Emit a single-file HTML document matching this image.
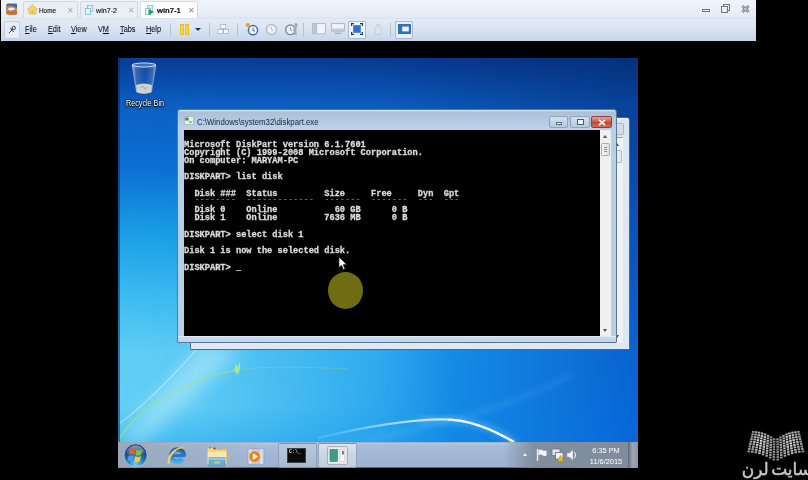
<!DOCTYPE html>
<html lang="en">
<head>
<meta charset="utf-8">
<title>win7-1 - VMware Workstation</title>
<style>
html,body{margin:0;padding:0;background:#000;}
body{width:808px;height:480px;overflow:hidden;position:relative;font-family:"Liberation Sans",sans-serif;}
.abs{position:absolute;}
/* ---------- VMware chrome ---------- */
#chrome{position:absolute;left:1px;top:0;width:755px;height:41px;background:linear-gradient(#eff4fa 0,#e9eff7 12px,#e4ebf5 17px,#d6e0ee 18px,#e2eaf5 19.5px,#dbe5f3 28px,#c8d6ec 40px);overflow:hidden;filter:blur(.35px);}
.tab{position:absolute;top:1px;height:17px;border:1px solid #cfd8e4;border-bottom:none;border-radius:2px 2px 0 0;background:#eaeff6;box-sizing:border-box;}
.tab.active{background:#fff;border-color:#d5dce6;}
.tab span.t{position:absolute;top:3.5px;font-size:7.6px;color:#14181f;-webkit-text-stroke:.15px #14181f;white-space:nowrap;transform-origin:0 50%;transform:scaleX(.84);}
.tab.active span.t{font-weight:bold;color:#111;}
.tab span.x{position:absolute;top:3.5px;font-size:7.6px;color:#a3abb6;}
.menu{position:absolute;top:24px;font-size:8.6px;transform:scaleX(.85);color:#0a0f1a;-webkit-text-stroke:.08px #0a0f1a;white-space:nowrap;transform-origin:0 50%;}
.menu u{text-decoration:underline;text-underline-offset:1px;}
.sep{position:absolute;top:23px;width:1px;height:14px;background:#b4c2d6;}
.tbtn{position:absolute;top:20.5px;height:18px;border:1px solid #c0cde0;background:#e6edf8;box-sizing:border-box;border-radius:1px;}
/* ---------- Desktop ---------- */
#desk{position:absolute;left:118px;top:58px;width:520px;height:410px;overflow:hidden;background:#0c55b8;filter:blur(.35px);}
#wall{position:absolute;left:0;top:0;}
#rb{position:absolute;left:1.5px;top:39.6px;width:50px;text-align:center;color:#fff;font-size:8.4px;white-space:nowrap;text-shadow:0 1px 1px #000,0 0 2px #000,0 0 3px #000;transform:scaleX(.86);filter:blur(.25px);}
/* windows */
.win{position:absolute;background:linear-gradient(#e4edf6 0,#aac1d9 2px,#bcd2ea 19px,#b9cfe6 20px);border:1px solid #5d7894;box-sizing:border-box;border-radius:3px 3px 1px 1px;}
#title{position:absolute;left:19px;top:6.4px;font-size:9px;color:#1b2532;white-space:nowrap;transform-origin:0 50%;transform:scaleX(.868);}
#con{position:absolute;left:6px;top:20.2px;width:416px;height:205.5px;background:#000;overflow:hidden;}
#con pre{margin:0;position:absolute;left:0;top:1.9px;font-family:"Liberation Mono",monospace;font-weight:bold;font-size:8.667px;line-height:8.2px;color:#dcdcdc;letter-spacing:0;filter:blur(.3px);-webkit-text-stroke:.3px #dcdcdc;}
#sb{position:absolute;left:422px;top:20.2px;width:11px;height:205.5px;background:#eef0f2;}
.cb{position:absolute;top:6px;height:12px;box-sizing:border-box;border:1px solid #8fa3ba;border-radius:2px;background:linear-gradient(#d3e0ee,#b5c9df);}
/* taskbar */
#tb{position:absolute;left:0;top:383.6px;width:520px;height:26.4px;background:linear-gradient(#8fa9c8 0,#b3c4dc 1.5px,#a8bbd8 4px,#a2b6d4 60%,#9fb2d0 100%);border-bottom:1px solid #58677a;box-sizing:border-box;}
.tbb{position:absolute;top:1px;height:25px;box-sizing:border-box;border:1px solid #7c92ab;border-radius:2px;}
.tray{position:absolute;color:#fff;font-size:7.4px;white-space:nowrap;text-align:center;}
#wm{position:absolute;right:-4px;top:457px;text-align:right;color:#c6c6c6;font-family:"DejaVu Sans","Liberation Sans",sans-serif;font-size:17px;line-height:24px;white-space:nowrap;direction:rtl;filter:blur(.3px);-webkit-text-stroke:.45px #c6c6c6;word-spacing:-3px;}
</style>
</head>
<body>

<!-- ================= VMware top chrome ================= -->
<div id="chrome">
  <svg id="vmicon" class="abs" style="left:4.7px;top:3.4px" width="11.6" height="12" viewBox="0 0 13 13"><rect x=".4" y=".4" width="12.2" height="12.2" rx="2" fill="#2f6fb8"/><path d="M.4 4 Q3 2.4 7 3 Q11 3.6 12.6 6.5 V10.6 Q12.6 12.6 10.6 12.6 H2.4 Q.4 12.6 .4 10.6Z" fill="#e8802a"/><path d="M.4 9.6 Q6 11.2 12.6 9 V10.6 Q12.6 12.6 10.6 12.6 H2.4 Q.4 12.6 .4 10.6Z" fill="#d8641e"/><ellipse cx="6" cy="6.6" rx="3.6" ry="1.9" fill="#eef3f8"/><path d="M2.4 7.8 Q6 9.2 10.6 7.4 L10 8.8 Q6 10 2.8 9Z" fill="#3f82c8"/></svg>
  <div class="tab" style="left:22px;width:55px;">
    <svg class="abs" style="left:3px;top:2px" width="11" height="11" viewBox="0 0 11 11"><path d="M0.5 5.5 L5.5 0.8 L10.5 5.5 L9 5.5 L9 10 L2 10 L2 5.5 Z" fill="#f3d668" stroke="#e0bb4a" stroke-width=".8"/><rect x="4.5" y="6.5" width="2" height="3.5" fill="#e6c044"/></svg>
    <span class="t" style="left:15px;">Home</span><span class="x" style="left:43px;">✕</span>
  </div>
  <div class="tab" style="left:79px;width:58px;">
    <svg class="abs" style="left:4px;top:2.5px" width="9.5" height="10.5" viewBox="0 0 11 12"><rect x="3" y=".5" width="6" height="7" fill="#dff0fa" stroke="#79b6d9" stroke-width=".9"/><rect x=".5" y="4" width="6" height="7" fill="#e8f5fc" stroke="#79b6d9" stroke-width=".9"/></svg>
    <span class="t" style="left:15px;transform:scaleX(.94)">win7-2</span><span class="x" style="left:47px;">✕</span>
  </div>
  <div class="tab active" style="left:139px;width:58px;">
    <svg class="abs" style="left:3.5px;top:2.5px" width="10.5" height="10.5" viewBox="0 0 12 12"><rect x="3" y=".5" width="6" height="7" fill="#dff0fa" stroke="#79b6d9" stroke-width=".9"/><rect x=".5" y="4" width="6" height="7" fill="#e8f5fc" stroke="#79b6d9" stroke-width=".9"/><path d="M4 4.5 L10.5 8 L4 11.5 Z" fill="#22a83a"/></svg>
    <span class="t" style="left:16px;transform:scaleX(1.01)">win7-1</span><span class="x" style="left:47px;color:#7d8792;">✕</span>
  </div>

  <!-- window controls -->
  <div class="abs" style="left:701px;top:9px;width:8px;height:3px;border:1px solid #6d7784;box-sizing:border-box;"></div>
  <div class="abs" style="left:722px;top:4px;width:7px;height:7px;border:1px solid #6d7784;box-sizing:border-box;"></div>
  <div class="abs" style="left:720px;top:6px;width:7px;height:7px;border:1px solid #6d7784;background:#e9eef5;box-sizing:border-box;"></div>
  <svg class="abs" style="left:739.5px;top:5px" width="9" height="8" viewBox="0 0 9 8"><path d="M1.3 1 L7.7 7 M7.7 1 L1.3 7" stroke="#6d7784" stroke-width="2.6"/><path d="M1.3 1 L7.7 7 M7.7 1 L1.3 7" stroke="#f3f5f9" stroke-width=".9"/></svg>

  <!-- menu row -->
  <div class="tbtn" style="left:3px;width:16px;"></div>
  <svg class="abs" style="left:7px;top:24.5px" width="9" height="9" viewBox="0 0 11 11"><path d="M1 10 L4.6 6.4" stroke="#2a2f3a" stroke-width="1.1"/><circle cx="7" cy="3.6" r="2.1" fill="none" stroke="#2a2f3a" stroke-width="1.1"/><path d="M2.6 4.2 L6.8 8.4" stroke="#2a2f3a" stroke-width="1.2"/><path d="M4.2 5.8 L5.8 4.6" stroke="#2a2f3a" stroke-width="1.6"/></svg>
  <span class="menu" id="m1" style="left:24px;"><u>F</u>ile</span>
  <span class="menu" id="m2" style="left:47px;"><u>E</u>dit</span>
  <span class="menu" id="m3" style="left:70px;"><u>V</u>iew</span>
  <span class="menu" id="m4" style="left:97px;">V<u>M</u></span>
  <span class="menu" id="m5" style="left:119px;"><u>T</u>abs</span>
  <span class="menu" id="m6" style="left:145px;"><u>H</u>elp</span>
  <div class="sep" style="left:169px;"></div>
  <div class="abs" style="left:179px;top:24px;width:4px;height:11px;background:#f6d643;border:.5px solid #e6bc24;box-sizing:border-box;"></div>
  <div class="abs" style="left:184px;top:24px;width:4px;height:11px;background:#f6d643;border:.5px solid #e6bc24;box-sizing:border-box;"></div>
  <div class="abs" style="left:194px;top:28px;width:0;height:0;border-left:3px solid transparent;border-right:3px solid transparent;border-top:3.5px solid #27364e;"></div>
  <div class="sep" style="left:208px;"></div>
  <div id="tools">
    <!-- send ctrl-alt-del / network boxes -->
    <svg class="abs" style="left:216px;top:24px" width="12.5" height="11" viewBox="0 0 14 13"><rect x="4" y=".6" width="6" height="5" fill="#f7f9fc" stroke="#9fa9b8" stroke-width=".8"/><rect x=".6" y="6.4" width="6" height="5" fill="#f7f9fc" stroke="#9fa9b8" stroke-width=".8"/><rect x="7.4" y="6.4" width="6" height="5" fill="#f7f9fc" stroke="#9fa9b8" stroke-width=".8"/><path d="M7 5.6 V6.4" stroke="#8591a3" stroke-width=".8"/></svg>
    <div class="sep" style="left:236px;"></div>
    <!-- snapshot -->
    <svg class="abs" style="left:244px;top:22px" width="14" height="14" viewBox="0 0 14 14"><circle cx="8" cy="8.2" r="4.6" fill="#f4f8fc" stroke="#3d6ea8" stroke-width="1.5"/><path d="M8 5.6 V8.4 L10 9.2" stroke="#3d6ea8" stroke-width="1" fill="none"/><circle cx="2.8" cy="3" r="2.1" fill="#f39a2b"/></svg>
    <svg class="abs" style="left:263px;top:22px" width="14" height="14" viewBox="0 0 14 14"><circle cx="7.5" cy="7.5" r="5" fill="#eef1f5" stroke="#b3bcc8" stroke-width="1.4"/><path d="M7.5 4.8 V7.8 L9.4 8.6" stroke="#b3bcc8" stroke-width="1" fill="none"/><path d="M.8 5.5 L3.6 4 L3.4 7 Z" fill="#b9c1cc"/></svg>
    <svg class="abs" style="left:283px;top:22px" width="14" height="14" viewBox="0 0 14 14"><circle cx="6.4" cy="7.8" r="4.8" fill="#eef2f7" stroke="#7d8da6" stroke-width="1.4"/><path d="M6.4 5.2 V8 L8 8.8" stroke="#7d8da6" stroke-width="1" fill="none"/><path d="M11.2 1.2 L9.6 7 L10.4 12.6 L12.4 12.6 L12 7 L13.4 2 Z" fill="#a7b1c0" stroke="#8d98a9" stroke-width=".5"/></svg>
    <div class="sep" style="left:302px;"></div>
    <!-- sidebar -->
    <svg class="abs" style="left:311px;top:23px" width="14" height="12" viewBox="0 0 14 12"><rect x=".6" y=".6" width="12.8" height="10.2" fill="#f3f5f8" stroke="#aab3c0" stroke-width=".9"/><rect x="1.2" y="1.2" width="4" height="9" fill="#b9c2cf"/></svg>
    <svg class="abs" style="left:330px;top:23px" width="14" height="12" viewBox="0 0 14 12"><rect x=".6" y=".6" width="12.8" height="7.6" fill="#f1f3f6" stroke="#a8b1be" stroke-width=".9"/><rect x="1.2" y="5.6" width="11.6" height="2.4" fill="#c0c8d3"/><rect x="3.5" y="9.6" width="7" height="1.4" fill="#a8b1be"/></svg>
    <!-- fullscreen (active) -->
    <div class="tbtn" style="left:347px;width:18px;background:#eef3fb;border-color:#a9bbd4;"></div>
    <svg class="abs" style="left:350px;top:23px" width="12" height="12" viewBox="0 0 12 12"><rect x="2.2" y="2.2" width="7.6" height="7.6" fill="#2f74c4"/><path d="M.6 3 V.6 H3 M9 .6 H11.4 V3 M11.4 9 V11.4 H9 M3 11.4 H.6 V9" stroke="#263a55" stroke-width="1.2" fill="none"/></svg>
    <svg class="abs" style="left:371px;top:23px" width="12" height="12" viewBox="0 0 12 12"><path d="M3 11 V6 Q3 3.6 5 3.6 V1.6 Q5 .8 6 .8 Q7 .8 7 1.6 V3.6 Q9.4 3.8 9.4 6 V11 Z" fill="#e1e5eb" stroke="#c0c7d1" stroke-width=".8"/></svg>
    <div class="sep" style="left:389px;"></div>
    <div class="tbtn" style="left:394px;width:18px;background:#e6eef9;border-color:#a9bbd4;"></div>
    <svg class="abs" style="left:397px;top:24px" width="13" height="10" viewBox="0 0 13 10"><rect x=".5" y=".5" width="12" height="9" fill="#2f74c4" stroke="#255ea6" stroke-width=".8"/><rect x="4.2" y="2.6" width="6.6" height="4.8" fill="#eaf2fb"/></svg>
  </div>
</div>

<!-- ================= Windows 7 guest desktop ================= -->
<div id="desk">
  <svg id="wall" width="520" height="410" viewBox="0 0 520 410">
    <defs>
      <linearGradient id="gA" x1="0" y1="0" x2="0" y2="410" gradientUnits="userSpaceOnUse">
        <stop offset="0" stop-color="#0a3e96"/><stop offset=".05" stop-color="#0a4aa8"/><stop offset=".115" stop-color="#0c60c2"/><stop offset=".273" stop-color="#0c70d4"/><stop offset=".42" stop-color="#1a9de4"/><stop offset=".566" stop-color="#38b9f0"/><stop offset=".712" stop-color="#60cdf4"/><stop offset=".85" stop-color="#64cff4"/><stop offset=".935" stop-color="#46bef0"/>
      </linearGradient>
      <linearGradient id="gC" x1="0" y1="0" x2="0" y2="410" gradientUnits="userSpaceOnUse">
        <stop offset="0" stop-color="#083890"/><stop offset=".115" stop-color="#0b5cbc"/><stop offset=".4" stop-color="#0c70d6"/><stop offset=".72" stop-color="#1a9cec"/><stop offset=".935" stop-color="#1696eb"/>
      </linearGradient>
      <linearGradient id="gB" x1="0" y1="0" x2="0" y2="410" gradientUnits="userSpaceOnUse">
        <stop offset="0" stop-color="#06307a"/><stop offset=".115" stop-color="#08429a"/><stop offset=".36" stop-color="#0a50b2"/><stop offset=".7" stop-color="#0a62d0"/><stop offset=".935" stop-color="#0868d8"/>
      </linearGradient>
      <linearGradient id="gM1" x1="0" y1="0" x2="520" y2="0" gradientUnits="userSpaceOnUse">
        <stop offset="0" stop-color="#fff"/><stop offset=".15" stop-color="#ececec"/><stop offset=".4" stop-color="#808080"/><stop offset=".65" stop-color="#000"/>
      </linearGradient>
      <linearGradient id="gM2" x1="0" y1="0" x2="520" y2="0" gradientUnits="userSpaceOnUse">
        <stop offset=".5" stop-color="#fff"/><stop offset="1" stop-color="#000"/>
      </linearGradient>
      <linearGradient id="gSw" x1="215" y1="0" x2="395" y2="0" gradientUnits="userSpaceOnUse">
        <stop offset="0" stop-color="#fff" stop-opacity=".15"/><stop offset=".45" stop-color="#fff" stop-opacity=".7"/><stop offset="1" stop-color="#fff" stop-opacity="1"/>
      </linearGradient>
      <mask id="mk1"><rect width="520" height="410" fill="url(#gM1)"/></mask>
      <mask id="mk2"><rect width="520" height="410" fill="url(#gM2)"/></mask>
      <filter id="b3" x="-20%" y="-20%" width="140%" height="140%"><feGaussianBlur stdDeviation="3"/></filter>
      <filter id="b1" x="-20%" y="-20%" width="140%" height="140%"><feGaussianBlur stdDeviation=".7"/></filter>
      <filter id="b8" x="-30%" y="-30%" width="160%" height="160%"><feGaussianBlur stdDeviation="9"/></filter>
    </defs>
    <rect width="520" height="410" fill="url(#gB)"/>
    <rect width="520" height="410" fill="url(#gC)" mask="url(#mk2)"/>
    <rect width="520" height="410" fill="url(#gA)" mask="url(#mk1)"/>
    <!-- light beams -->
    <path d="M0 385 L85 285 L125 292 L24 385 Z" fill="#c8f2fc" opacity=".5" filter="url(#b8)"/>
    <path d="M0 366.5 C25 349 55 318 80 290" stroke="#e6f8fd" stroke-width="1.3" fill="none" opacity=".4" filter="url(#b1)"/>
    <path d="M0 383 C22 347 64 324 119 311.5" stroke="#a6e27c" stroke-width="1.2" fill="none" opacity=".9" filter="url(#b1)"/>
    <path d="M116.5 312 l.8 -7.5 l2 5 l2.6 -6 l.2 8 l-2.8 5.5 z" fill="#b4e88a" opacity=".9" filter="url(#b1)"/>
    <path d="M119 311.5 C150 308 190 309 230 311" stroke="#9fe07a" stroke-width="1" fill="none" opacity=".3" filter="url(#b1)"/>
    <!-- white swoosh bottom right -->
    <path d="M200 380 C250 368 295 361.5 325 361.4 C350 361.4 372 370 396 384" stroke="url(#gSw)" stroke-width="2.2" fill="none" filter="url(#b1)"/>
    <path d="M330 361.6 C352 362 373 370.5 396 384" stroke="#ffffff" stroke-width="2.4" fill="none" opacity=".75" filter="url(#b1)"/>
    <path d="M300 362.6 C345 358 375 368 398 385" stroke="#bfe8fc" stroke-width="5" fill="none" opacity=".35" filter="url(#b3)"/>
    <path d="M245 383 C320 367 400 347 455 316" stroke="#bfe6fb" stroke-width="2" fill="none" opacity=".3" filter="url(#b3)"/>
    <rect x="0" y="0" width="2" height="410" fill="#062a5c" opacity=".55"/>
  </svg>

  <svg class="abs" style="left:12px;top:4px" width="28" height="34" viewBox="0 0 28 34">
    <defs><linearGradient id="rbg" x1="0" y1="0" x2="1" y2="0"><stop offset="0" stop-color="#dfeaf6" stop-opacity=".65"/><stop offset=".18" stop-color="#9fb9dc" stop-opacity=".3"/><stop offset=".55" stop-color="#6f95cc" stop-opacity=".12"/><stop offset=".85" stop-color="#a9c0e2" stop-opacity=".28"/><stop offset="1" stop-color="#c9d9ee" stop-opacity=".55"/></linearGradient></defs>
    <g filter="url(#b1)">
    <path d="M2.2 3 L6.6 30 Q14 33 21.4 30 L25.8 3 Z" fill="url(#rbg)" stroke="#c6d6ea" stroke-opacity=".7" stroke-width=".8"/>
    <ellipse cx="14" cy="3" rx="11.8" ry="2" fill="#3a6fc0" fill-opacity=".5" stroke="#dbe6f4" stroke-width="1"/>
    <path d="M6 23 Q14 20 22 23 L21.2 30 Q14 33 6.8 30 Z" fill="#e9e6d8" fill-opacity=".85"/>
    <path d="M10 26 l3 -2 l2 3 l3 -2" stroke="#a9a48c" stroke-width=".8" fill="none"/>
    </g>
  </svg>
  <div id="rb">Recycle Bin</div>

  <!-- back window -->
  <div class="win" id="w2" style="left:72px;top:58.7px;width:440px;height:233px;background:linear-gradient(#eef2f7 0,#d9e2ed 3px,#dfe7f0 20px);border-color:#4f6a86;">
    <div class="abs" style="left:412px;top:5px;width:21px;height:12px;border:1px solid #a9b4c6;border-radius:2px;background:#d6dbea;box-sizing:border-box;"></div>
    <div class="abs" style="left:421px;top:19.5px;width:11px;height:206px;background:#f0f2f5;border-top:1px solid #9aa4b2;box-sizing:border-box;">
      <div class="abs" style="left:3px;top:5px;width:0;height:0;border-left:2.5px solid transparent;border-right:2.5px solid transparent;border-bottom:3px solid #39424e;"></div>
      <div class="abs" style="left:1px;top:12px;width:9px;height:13px;border:1px solid #b3bbc6;border-radius:1px;background:#e6e9ee;box-sizing:border-box;"></div>
      <div class="abs" style="left:3px;top:197px;width:0;height:0;border-left:2.5px solid transparent;border-right:2.5px solid transparent;border-top:3px solid #39424e;"></div>
    </div>
  </div>
  <!-- front window -->
  <div class="win" id="w1" style="left:59px;top:51.3px;width:440px;height:233.4px;">
    <svg class="abs" style="left:6px;top:6px" width="10" height="9" viewBox="0 0 10 9"><rect x=".5" y=".5" width="9" height="8" fill="#e9efe9" stroke="#9aa7b0" stroke-width=".6"/><rect x="1.2" y="1.5" width="3.4" height="3" fill="#3d8f55"/><rect x="5" y="5.5" width="3" height="1" fill="#777"/></svg>
    <div class="cb" style="left:371px;width:19px;"><div class="abs" style="left:6px;top:5px;width:6px;height:2.5px;background:#f4f7fa;border:.6px solid #5b6b7e;box-sizing:border-box;"></div></div>
    <div class="cb" style="left:392px;width:20px;"><div class="abs" style="left:6px;top:2px;width:7px;height:6px;border:1px solid #4e5d70;background:#eef2f6;box-sizing:border-box;"></div></div>
    <div class="cb" style="left:413px;width:21px;border-color:#8c4238;background:linear-gradient(#e2a294 0,#d0604c 45%,#c04431 50%,#d4705a 100%);"><svg class="abs" style="left:6px;top:1.5px" width="8" height="7" viewBox="0 0 8 7"><path d="M1 .8 L7 6.2 M7 .8 L1 6.2" stroke="#fff" stroke-width="1.7"/></svg></div>
    <span id="title">C:\Windows\system32\diskpart.exe</span>
    <div id="con"><pre>

Microsoft DiskPart version 6.1.7601
Copyright (C) 1999-2008 Microsoft Corporation.
On computer: MARYAM-PC

DISKPART&gt; list disk

  Disk ###  Status         Size     Free     Dyn  Gpt
<span style="color:#8a8a8a;position:relative;top:-1.8px;font-weight:normal;-webkit-text-stroke:0">  --------  -------------  -------  -------  ---  ---</span>
  Disk 0    Online           60 GB      0 B
  Disk 1    Online         7636 MB      0 B

DISKPART&gt; select disk 1

Disk 1 is now the selected disk.

DISKPART&gt; _</pre></div>
    <div class="abs" style="left:0;top:226px;width:438px;height:5.5px;background:linear-gradient(#eef4fa 0,#c6daee 1.5px,#bfd5ec 100%);"></div>
    <div id="sb">
      <div class="abs" style="left:3px;top:5px;width:0;height:0;border-left:2.5px solid transparent;border-right:2.5px solid transparent;border-bottom:3px solid #4b5563;"></div>
      <div class="abs" style="left:1px;top:13px;width:9px;height:13px;border:1px solid #a4adb8;border-radius:1.5px;background:linear-gradient(90deg,#f4f5f7,#dcdfe4);box-sizing:border-box;"><div class="abs" style="left:2px;top:3px;width:3px;height:1px;background:#8a939f;box-shadow:0 2px 0 #8a939f,0 4px 0 #8a939f;"></div></div>
      <div class="abs" style="left:3px;top:198.5px;width:0;height:0;border-left:2.5px solid transparent;border-right:2.5px solid transparent;border-top:3px solid #4b5563;"></div>
    </div>
  </div>

  <div class="abs" style="left:209.5px;top:214px;width:35.5px;height:37px;border-radius:50%;background:#6e6d12;filter:blur(.5px);"></div>
  <svg class="abs" style="left:220px;top:198px;filter:blur(.3px)" width="10" height="15" viewBox="0 0 10 15"><path d="M1 1 L1 11.5 L3.5 9.3 L5.3 13.5 L7 12.8 L5.2 8.7 L8.5 8.5 Z" fill="#fff" stroke="#222" stroke-width=".7"/></svg>

  <!-- taskbar -->
  <div id="tb">
    <div class="abs" style="left:0;top:0;width:520px;height:26px;background:linear-gradient(90deg,rgba(150,162,180,.8) 0,rgba(152,166,186,.45) 14%,rgba(166,186,216,0) 28%,rgba(166,186,216,0) 74%,rgba(125,138,154,.9) 80%,rgba(128,140,156,1) 100%);"></div>
    <!-- start orb -->
    <svg class="abs" style="left:5px;top:1px;filter:blur(.4px)" width="25" height="25" viewBox="0 0 25 25">
      <defs><radialGradient id="orb" cx=".5" cy=".9" r=".85"><stop offset="0" stop-color="#6fd0ee"/><stop offset=".35" stop-color="#2f86c4"/><stop offset=".7" stop-color="#1b4f8e"/><stop offset="1" stop-color="#16386e"/></radialGradient>
      <linearGradient id="orbh" x1="0" y1="0" x2="0" y2="1"><stop offset="0" stop-color="#fff" stop-opacity=".5"/><stop offset="1" stop-color="#fff" stop-opacity=".05"/></linearGradient></defs>
      <circle cx="12.6" cy="12.3" r="11.5" fill="url(#orb)" stroke="#b4c6dc" stroke-opacity=".8" stroke-width="1"/>
      <path d="M3 10 A9.8 9.8 0 0 1 22.2 10 Q12.6 13 3 10Z" fill="url(#orbh)"/>
      <path d="M6.9 6.6 Q9.7 4.8 12.3 6.3 L11.3 11.6 Q8.7 10.2 5.7 12 Z" fill="#ee5a2a"/>
      <path d="M13.4 6.8 Q16 8.3 19.3 6.5 L18.2 11.8 Q15.2 13.5 12.4 12.1 Z" fill="#7cc43c"/>
      <path d="M5.4 13.2 Q8.5 11.5 11 12.8 L10 18.3 Q7.4 16.8 4.3 18.6 Z" fill="#3f9fe6"/>
      <path d="M12.1 13.3 Q15 14.8 17.9 13.1 L16.9 18.3 Q14 20.2 11.1 18.7 Z" fill="#fbc82c"/>
    </svg>
    <!-- IE -->
    <svg class="abs" style="left:48px;top:3px;filter:blur(.4px)" width="22" height="22" viewBox="0 0 22 22">
      <defs><linearGradient id="ieg" x1="0" y1="0" x2="0" y2="1"><stop offset="0" stop-color="#1c58ac"/><stop offset=".55" stop-color="#2a82d4"/><stop offset="1" stop-color="#46b4ec"/></linearGradient></defs>
      <path d="M17.9 10.6 A6.3 6.3 0 1 0 16.6 14.6" fill="none" stroke="url(#ieg)" stroke-width="4.4"/><circle cx="11.6" cy="10.6" r="6" fill="#3a90dc" fill-opacity=".35"/>
      <path d="M6 10.6 H19.6" stroke="#2776cc" stroke-width="2.8"/>
      <path d="M2.6 18.6 Q2.2 10.4 9.6 5 Q14.6 1.6 18.4 3.2" fill="none" stroke="#f0c030" stroke-width="1.7"/>
      <path d="M2.6 18.6 Q2.2 10.4 9.6 5" fill="none" stroke="#f6d060" stroke-width="2.1"/>
    </svg>
    <!-- Explorer -->
    <svg class="abs" style="left:88px;top:3px;filter:blur(.4px)" width="22" height="23" viewBox="0 0 22 23">
      <path d="M1.5 2.5 H8 L9.5 4 H20.5 V19 H1.5 Z" fill="#f2dc88" stroke="#d4b458" stroke-width=".8"/>
      <rect x="3" y="1.8" width="2" height="1.8" fill="#5db35a"/><rect x="7" y="2.6" width="3" height="1.8" fill="#d94a36"/><rect x="12" y="3.4" width="4" height="1.6" fill="#9ab8d8"/>
      <rect x="1.5" y="6" width="19" height="13" fill="#f7eab0" stroke="#dcc06a" stroke-width=".6"/>
      <path d="M3 12.5 H19 V21 H3 Z" fill="#62aee0" stroke="#4b94c6" stroke-width=".7"/>
      <path d="M3 12.5 H19 V15 H3 Z" fill="#8cc8ee"/>
      <rect x="8" y="16.6" width="6" height="1.8" rx=".6" fill="#e8c94a"/>
    </svg>
    <!-- WMP -->
    <svg class="abs" style="left:129px;top:6px;filter:blur(.4px)" width="18" height="17" viewBox="0 0 18 17">
      <rect x=".7" y=".7" width="16.6" height="15.6" rx="1" fill="#b9cce4" stroke="#8ea8c8" stroke-width=".8"/>
      <rect x="2.4" y="1" width="1.6" height="15" fill="#dfe8f4"/><rect x="13.6" y="1" width="1.6" height="15" fill="#dfe8f4"/>
      <circle cx="7.6" cy="8.6" r="5.9" fill="#ee7f1e" stroke="#fbe0c0" stroke-width=".8"/>
      <path d="M5.8 5.2 L11.2 8.6 L5.8 12 Z" fill="#fff"/>
    </svg>
    <!-- running buttons -->
    <div class="tbb" style="left:160px;width:39px;background:linear-gradient(#b9c8dc,#a7b9d0);border-color:#7d92ad #8ea2bb;"></div>
    <div class="abs" style="left:169px;top:6px;width:19px;height:15px;background:#0a0a0a;border:1px solid #3a3f48;box-sizing:border-box;"><span style="position:absolute;left:1px;top:1px;font-family:'Liberation Mono',monospace;font-size:5px;line-height:5px;color:#ddd;font-weight:bold;">C:\_</span></div>
    <div class="tbb" style="left:200px;width:39px;background:linear-gradient(#dbe3ee,#c9d5e4 50%,#c3d0e0);border-color:#7f93ac #93a6be;"></div>
    <svg class="abs" style="left:209px;top:4px;filter:blur(.35px)" width="21" height="19" viewBox="0 0 21 19">
      <rect x=".6" y=".6" width="19.8" height="17.8" rx="1" fill="#e9ecee" stroke="#9aa3ab" stroke-width=".9"/>
      <rect x="3" y="3.5" width="7.5" height="12" fill="#3f9c86" stroke="#2f7f6c" stroke-width=".6"/>
      <rect x="13" y="3.5" width="4.6" height="12" fill="#f8f8f6" stroke="#b8bcc0" stroke-width=".5"/>
      <rect x="15.2" y="5" width="1.4" height="3.5" fill="#444"/>
    </svg>
    <!-- tray -->
    <div class="abs" style="left:405px;top:11px;width:0;height:0;border-left:2.5px solid transparent;border-right:2.5px solid transparent;border-bottom:3px solid #f1f4f8;"></div>
    <svg class="abs" style="left:418px;top:6px;filter:blur(.3px)" width="12" height="14" viewBox="0 0 12 14"><path d="M1.5 1 V13" stroke="#f4f6f9" stroke-width="1.3"/><path d="M2.5 2 Q5 .8 6.5 2.2 Q8.2 3.4 10.5 2.4 V7.4 Q8.2 8.6 6.5 7.3 Q5 6 2.5 7.2 Z" fill="#f4f6f9"/></svg>
    <svg class="abs" style="left:433px;top:6px;filter:blur(.3px)" width="13" height="14" viewBox="0 0 13 14"><rect x="1" y="1" width="8" height="6.5" fill="#dfe6ee" stroke="#6c7684" stroke-width=".8"/><rect x="4.5" y="4.5" width="7.5" height="6.5" fill="#eef2f6" stroke="#6c7684" stroke-width=".8"/><path d="M6.5 13 L9.5 7.5 L12.5 13 Z" fill="#f1c40f" stroke="#a88400" stroke-width=".5"/></svg>
    <svg class="abs" style="left:448px;top:6px;filter:blur(.3px)" width="12" height="14" viewBox="0 0 12 14"><path d="M1 5 H3.5 L7 1.5 V12.5 L3.5 9 H1 Z" fill="#f4f6f9" stroke="#8d97a4" stroke-width=".5"/><path d="M8.6 4 Q10.6 7 8.6 10" stroke="#f4f6f9" stroke-width="1" fill="none"/></svg>
    <div class="tray" id="tm" style="left:470px;top:4px;width:36px;">6:35 PM</div>
    <div class="tray" id="dt" style="left:468px;top:15px;width:40px;">11/6/2015</div>
    <div class="abs" style="left:510px;top:0;width:10px;height:26px;background:linear-gradient(90deg,#6f7c8c,#9aa5b3 40%,#8c98a8);border-left:1px solid #5f6b7a;box-sizing:border-box;"></div>
  </div>
</div>

<!-- watermark -->
<svg id="logo" class="abs" style="left:744px;top:427px;filter:blur(.4px)" width="64" height="38" viewBox="0 0 64 38"><g fill="#e6e6e6"><rect x="7.9" y="3.9" width="2.5" height="1.9" opacity="0.65"/><rect x="7.4" y="6.4" width="2.5" height="1.9" opacity="0.67"/><rect x="6.8" y="8.8" width="2.5" height="1.9" opacity="0.69"/><rect x="6.3" y="11.2" width="2.5" height="1.9" opacity="0.70"/><rect x="5.7" y="13.7" width="2.5" height="1.9" opacity="0.72"/><rect x="5.1" y="16.1" width="2.5" height="1.9" opacity="0.70"/><rect x="4.6" y="18.6" width="2.5" height="1.9" opacity="0.69"/><rect x="4.0" y="21.0" width="2.5" height="1.9" opacity="0.67"/><rect x="3.4" y="23.5" width="2.5" height="1.9" opacity="0.65"/><rect x="10.9" y="4.2" width="2.5" height="1.9" opacity="0.71"/><rect x="10.4" y="6.6" width="2.5" height="1.9" opacity="0.73"/><rect x="10.0" y="9.1" width="2.5" height="1.9" opacity="0.76"/><rect x="9.5" y="11.5" width="2.5" height="1.9" opacity="0.78"/><rect x="9.0" y="14.0" width="2.5" height="1.9" opacity="0.81"/><rect x="8.5" y="16.4" width="2.5" height="1.9" opacity="0.78"/><rect x="8.0" y="18.9" width="2.5" height="1.9" opacity="0.76"/><rect x="7.5" y="21.3" width="2.5" height="1.9" opacity="0.73"/><rect x="7.0" y="23.8" width="2.5" height="1.9" opacity="0.71"/><rect x="13.9" y="4.7" width="2.5" height="1.9" opacity="0.76"/><rect x="13.5" y="7.2" width="2.5" height="1.9" opacity="0.80"/><rect x="13.1" y="9.6" width="2.5" height="1.9" opacity="0.83"/><rect x="12.7" y="12.1" width="2.5" height="1.9" opacity="0.87"/><rect x="12.3" y="14.5" width="2.5" height="1.9" opacity="0.90"/><rect x="11.9" y="17.0" width="2.5" height="1.9" opacity="0.87"/><rect x="11.4" y="19.4" width="2.5" height="1.9" opacity="0.83"/><rect x="11.0" y="21.9" width="2.5" height="1.9" opacity="0.80"/><rect x="10.6" y="24.3" width="2.5" height="1.9" opacity="0.76"/><rect x="16.9" y="5.5" width="2.5" height="1.9" opacity="0.81"/><rect x="16.6" y="8.0" width="2.5" height="1.9" opacity="0.86"/><rect x="16.2" y="10.4" width="2.5" height="1.9" opacity="0.90"/><rect x="15.9" y="12.9" width="2.5" height="1.9" opacity="0.95"/><rect x="15.6" y="15.4" width="2.5" height="1.9" opacity="0.99"/><rect x="15.2" y="17.8" width="2.5" height="1.9" opacity="0.95"/><rect x="14.9" y="20.3" width="2.5" height="1.9" opacity="0.90"/><rect x="14.5" y="22.8" width="2.5" height="1.9" opacity="0.86"/><rect x="14.2" y="25.2" width="2.5" height="1.9" opacity="0.81"/><rect x="19.9" y="6.5" width="2.5" height="1.9" opacity="0.77"/><rect x="19.6" y="9.0" width="2.5" height="1.9" opacity="0.81"/><rect x="19.4" y="11.5" width="2.5" height="1.9" opacity="0.85"/><rect x="19.1" y="14.0" width="2.5" height="1.9" opacity="0.88"/><rect x="18.8" y="16.5" width="2.5" height="1.9" opacity="0.92"/><rect x="18.6" y="18.9" width="2.5" height="1.9" opacity="0.88"/><rect x="18.3" y="21.4" width="2.5" height="1.9" opacity="0.85"/><rect x="18.1" y="23.9" width="2.5" height="1.9" opacity="0.81"/><rect x="17.8" y="26.4" width="2.5" height="1.9" opacity="0.77"/><rect x="22.9" y="7.9" width="2.5" height="1.9" opacity="0.72"/><rect x="22.7" y="10.4" width="2.5" height="1.9" opacity="0.75"/><rect x="22.5" y="12.9" width="2.5" height="1.9" opacity="0.77"/><rect x="22.3" y="15.4" width="2.5" height="1.9" opacity="0.80"/><rect x="22.1" y="17.9" width="2.5" height="1.9" opacity="0.83"/><rect x="21.9" y="20.4" width="2.5" height="1.9" opacity="0.80"/><rect x="21.8" y="22.9" width="2.5" height="1.9" opacity="0.77"/><rect x="21.6" y="25.3" width="2.5" height="1.9" opacity="0.75"/><rect x="21.4" y="27.8" width="2.5" height="1.9" opacity="0.72"/><rect x="25.9" y="9.5" width="2.5" height="1.9" opacity="0.66"/><rect x="25.8" y="12.0" width="2.5" height="1.9" opacity="0.68"/><rect x="25.6" y="14.5" width="2.5" height="1.9" opacity="0.70"/><rect x="25.5" y="17.0" width="2.5" height="1.9" opacity="0.72"/><rect x="25.4" y="19.5" width="2.5" height="1.9" opacity="0.74"/><rect x="25.3" y="22.0" width="2.5" height="1.9" opacity="0.72"/><rect x="25.2" y="24.6" width="2.5" height="1.9" opacity="0.70"/><rect x="25.1" y="27.1" width="2.5" height="1.9" opacity="0.68"/><rect x="25.0" y="29.6" width="2.5" height="1.9" opacity="0.66"/><rect x="28.9" y="11.3" width="2.5" height="1.9" opacity="0.61"/><rect x="28.8" y="13.8" width="2.5" height="1.9" opacity="0.62"/><rect x="28.8" y="16.4" width="2.5" height="1.9" opacity="0.63"/><rect x="28.7" y="18.9" width="2.5" height="1.9" opacity="0.64"/><rect x="28.7" y="21.5" width="2.5" height="1.9" opacity="0.65"/><rect x="28.7" y="24.0" width="2.5" height="1.9" opacity="0.64"/><rect x="28.6" y="26.6" width="2.5" height="1.9" opacity="0.63"/><rect x="28.6" y="29.1" width="2.5" height="1.9" opacity="0.62"/><rect x="28.6" y="31.6" width="2.5" height="1.9" opacity="0.61"/><rect x="53.2" y="3.9" width="2.5" height="1.9" opacity="0.65"/><rect x="53.7" y="6.4" width="2.5" height="1.9" opacity="0.67"/><rect x="54.3" y="8.8" width="2.5" height="1.9" opacity="0.69"/><rect x="54.8" y="11.2" width="2.5" height="1.9" opacity="0.70"/><rect x="55.4" y="13.7" width="2.5" height="1.9" opacity="0.72"/><rect x="56.0" y="16.1" width="2.5" height="1.9" opacity="0.70"/><rect x="56.5" y="18.6" width="2.5" height="1.9" opacity="0.69"/><rect x="57.1" y="21.0" width="2.5" height="1.9" opacity="0.67"/><rect x="57.7" y="23.5" width="2.5" height="1.9" opacity="0.65"/><rect x="50.2" y="4.2" width="2.5" height="1.9" opacity="0.71"/><rect x="50.7" y="6.6" width="2.5" height="1.9" opacity="0.73"/><rect x="51.1" y="9.1" width="2.5" height="1.9" opacity="0.76"/><rect x="51.6" y="11.5" width="2.5" height="1.9" opacity="0.78"/><rect x="52.1" y="14.0" width="2.5" height="1.9" opacity="0.81"/><rect x="52.6" y="16.4" width="2.5" height="1.9" opacity="0.78"/><rect x="53.1" y="18.9" width="2.5" height="1.9" opacity="0.76"/><rect x="53.6" y="21.3" width="2.5" height="1.9" opacity="0.73"/><rect x="54.1" y="23.8" width="2.5" height="1.9" opacity="0.71"/><rect x="47.2" y="4.7" width="2.5" height="1.9" opacity="0.76"/><rect x="47.6" y="7.2" width="2.5" height="1.9" opacity="0.80"/><rect x="48.0" y="9.6" width="2.5" height="1.9" opacity="0.83"/><rect x="48.4" y="12.1" width="2.5" height="1.9" opacity="0.87"/><rect x="48.8" y="14.5" width="2.5" height="1.9" opacity="0.90"/><rect x="49.2" y="17.0" width="2.5" height="1.9" opacity="0.87"/><rect x="49.7" y="19.4" width="2.5" height="1.9" opacity="0.83"/><rect x="50.1" y="21.9" width="2.5" height="1.9" opacity="0.80"/><rect x="50.5" y="24.3" width="2.5" height="1.9" opacity="0.76"/><rect x="44.2" y="5.5" width="2.5" height="1.9" opacity="0.81"/><rect x="44.5" y="8.0" width="2.5" height="1.9" opacity="0.86"/><rect x="44.9" y="10.4" width="2.5" height="1.9" opacity="0.90"/><rect x="45.2" y="12.9" width="2.5" height="1.9" opacity="0.95"/><rect x="45.5" y="15.4" width="2.5" height="1.9" opacity="0.99"/><rect x="45.9" y="17.8" width="2.5" height="1.9" opacity="0.95"/><rect x="46.2" y="20.3" width="2.5" height="1.9" opacity="0.90"/><rect x="46.6" y="22.8" width="2.5" height="1.9" opacity="0.86"/><rect x="46.9" y="25.2" width="2.5" height="1.9" opacity="0.81"/><rect x="41.2" y="6.5" width="2.5" height="1.9" opacity="0.77"/><rect x="41.5" y="9.0" width="2.5" height="1.9" opacity="0.81"/><rect x="41.7" y="11.5" width="2.5" height="1.9" opacity="0.85"/><rect x="42.0" y="14.0" width="2.5" height="1.9" opacity="0.88"/><rect x="42.3" y="16.5" width="2.5" height="1.9" opacity="0.92"/><rect x="42.5" y="18.9" width="2.5" height="1.9" opacity="0.88"/><rect x="42.8" y="21.4" width="2.5" height="1.9" opacity="0.85"/><rect x="43.0" y="23.9" width="2.5" height="1.9" opacity="0.81"/><rect x="43.3" y="26.4" width="2.5" height="1.9" opacity="0.77"/><rect x="38.2" y="7.9" width="2.5" height="1.9" opacity="0.72"/><rect x="38.4" y="10.4" width="2.5" height="1.9" opacity="0.75"/><rect x="38.6" y="12.9" width="2.5" height="1.9" opacity="0.77"/><rect x="38.8" y="15.4" width="2.5" height="1.9" opacity="0.80"/><rect x="39.0" y="17.9" width="2.5" height="1.9" opacity="0.83"/><rect x="39.2" y="20.4" width="2.5" height="1.9" opacity="0.80"/><rect x="39.3" y="22.9" width="2.5" height="1.9" opacity="0.77"/><rect x="39.5" y="25.3" width="2.5" height="1.9" opacity="0.75"/><rect x="39.7" y="27.8" width="2.5" height="1.9" opacity="0.72"/><rect x="35.2" y="9.5" width="2.5" height="1.9" opacity="0.66"/><rect x="35.3" y="12.0" width="2.5" height="1.9" opacity="0.68"/><rect x="35.5" y="14.5" width="2.5" height="1.9" opacity="0.70"/><rect x="35.6" y="17.0" width="2.5" height="1.9" opacity="0.72"/><rect x="35.7" y="19.5" width="2.5" height="1.9" opacity="0.74"/><rect x="35.8" y="22.0" width="2.5" height="1.9" opacity="0.72"/><rect x="35.9" y="24.6" width="2.5" height="1.9" opacity="0.70"/><rect x="36.0" y="27.1" width="2.5" height="1.9" opacity="0.68"/><rect x="36.1" y="29.6" width="2.5" height="1.9" opacity="0.66"/><rect x="32.2" y="11.3" width="2.5" height="1.9" opacity="0.61"/><rect x="32.3" y="13.8" width="2.5" height="1.9" opacity="0.62"/><rect x="32.3" y="16.4" width="2.5" height="1.9" opacity="0.63"/><rect x="32.4" y="18.9" width="2.5" height="1.9" opacity="0.64"/><rect x="32.4" y="21.5" width="2.5" height="1.9" opacity="0.65"/><rect x="32.4" y="24.0" width="2.5" height="1.9" opacity="0.64"/><rect x="32.5" y="26.6" width="2.5" height="1.9" opacity="0.63"/><rect x="32.5" y="29.1" width="2.5" height="1.9" opacity="0.62"/><rect x="32.5" y="31.6" width="2.5" height="1.9" opacity="0.61"/></g></svg>
<div id="wm">سایت لرن</div>

</body>
</html>
